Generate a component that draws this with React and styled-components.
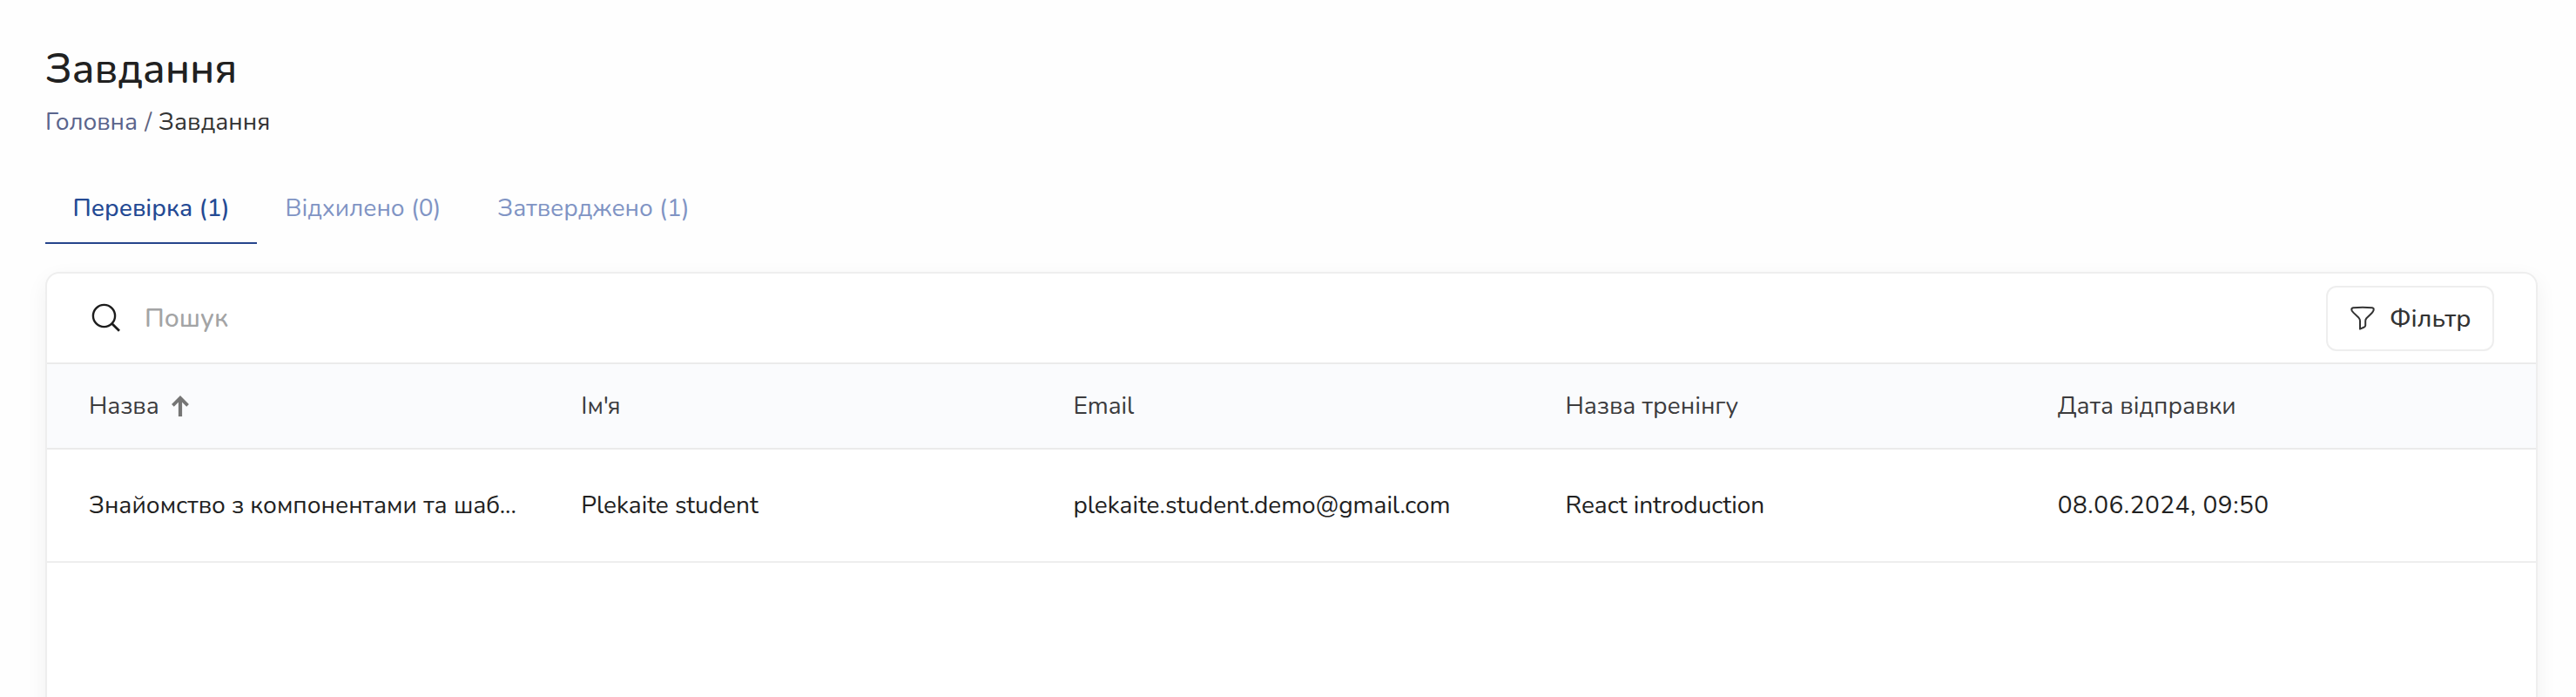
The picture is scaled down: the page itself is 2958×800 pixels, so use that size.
import styled, { createGlobalStyle } from "styled-components";
import { useState } from "react";

const columns = [
  { key: "name", label: "Назва" },
  { key: "student", label: "Ім'я" },
  { key: "email", label: "Email" },
  { key: "training", label: "Назва тренінгу" },
  { key: "date", label: "Дата відправки" },
];

const tasks = [
  {
    name: "Знайомство з компонентами та шаб...",
    student: "Plekaite student",
    email: "plekaite.student.demo@gmail.com",
    training: "React introduction",
    date: "08.06.2024, 09:50",
  },
];

const tabs = [
  { id: "review", label: "Перевірка (1)", width: 243 },
  { id: "rejected", label: "Відхилено (0)", width: 244 },
  { id: "approved", label: "Затверджено (1)", width: 285 },
];

function SearchIcon() {
  return (
    <svg width="34" height="34" viewBox="0 0 34 34" fill="none" stroke="#1c1c1c">
      <circle cx="14.5" cy="14.5" r="12.6" strokeWidth="2.4" />
      <path d="M23.6 23.6L32 31.8" strokeWidth="2.8" />
    </svg>
  );
}

function SortIcon() {
  return (
    <svg width="20" height="24" viewBox="0 0 20 24" fill="none" stroke="#757575">
      <path d="M1.4 11.4L10 2.8l8.6 8.6" strokeWidth="3.8" />
      <path d="M10 3v21" strokeWidth="4.2" />
    </svg>
  );
}

function FilterIcon() {
  return (
    <svg width="28" height="28" viewBox="0 0 28 28" fill="none" stroke="#333" strokeWidth="2" strokeLinejoin="round">
      <path d="M3 2.3Q14 1.3 25 2.3Q27.2 2.6 26.6 5Q26.2 6.6 24.6 8.2L18.4 14.2Q17.2 15.5 17.2 17.4V22.6Q17 23.8 15.8 24.5L11 26.6V17.2Q11 15.4 9.6 13.8L3.2 7.6Q1.6 6.2 1.3 4.6Q1.2 2.6 3 2.3Z" />
    </svg>
  );
}

export default function App() {
  const [activeTab, setActiveTab] = useState("review");
  const [search, setSearch] = useState("");

  return (
    <>
      <GlobalStyle />
      <Page>
        <Title>Завдання</Title>
        <Breadcrumbs>
          <HomeLink>Головна</HomeLink>
          <Separator>/</Separator>
          <CurrentPage>Завдання</CurrentPage>
        </Breadcrumbs>
        <TabList>
          {tabs.map((tab) => (
            <Tab
              key={tab.id}
              $active={tab.id === activeTab}
              $width={tab.width}
              onClick={() => setActiveTab(tab.id)}
            >
              {tab.label}
            </Tab>
          ))}
        </TabList>
        <Card>
          <Toolbar>
            <SearchIcon />
            <SearchInput
              placeholder="Пошук"
              value={search}
              onChange={(event) => setSearch(event.target.value)}
            />
            <FilterButton>
              <FilterIcon />
              <span>Фільтр</span>
            </FilterButton>
          </Toolbar>
          <HeaderRow>
            {columns.map((column) => (
              <HeaderCell key={column.key}>
                <span>{column.label}</span>
                {column.key === "name" && <SortIcon />}
              </HeaderCell>
            ))}
          </HeaderRow>
          {tasks.map((task, index) => (
            <Row key={index}>
              {columns.map(({ key }) => (
                <Cell key={key} $wide={key === "date"}>
                  {task[key]}
                </Cell>
              ))}
            </Row>
          ))}
        </Card>
      </Page>
    </>
  );
}

const GlobalStyle = createGlobalStyle`
  * {
    box-sizing: border-box;
  }

  body {
    margin: 0;
    background: #fefefe;
    font-family: Nunito, Lato, "Noto Sans", sans-serif;
    color: #212121;
  }

  button,
  input {
    font-family: inherit;
  }
`;

const Page = styled.div`
  display: flex;
  flex-direction: column;
  height: 800px;
  padding: 47px 44px 0 52px;
  overflow: hidden;
`;

const Title = styled.h1`
  margin: 0;
  font-size: 48px;
  font-weight: 500;
  line-height: 64px;
  letter-spacing: -0.15px;
`;

const Breadcrumbs = styled.nav`
  display: flex;
  flex: none;
  margin-top: 9px;
  font-size: 28px;
  line-height: 40px;
`;

const HomeLink = styled.a`
  color: #5a648c;
`;

const Separator = styled.span`
  margin: 0 8px;
  color: #5f6480;
`;

const CurrentPage = styled.span`
  color: #333;
`;

const TabList = styled.div`
  display: flex;
  flex: none;
  height: 84px;
  margin-top: 36px;
`;

const Tab = styled.button`
  flex: none;
  width: ${({ $width }) => $width}px;
  padding: 3px 0 0;
  border: none;
  border-bottom: 2px solid ${({ $active }) => ($active ? "#26458c" : "transparent")};
  background: none;
  color: ${({ $active }) => ($active ? "#244a94" : "#8094c4")};
  font-size: 28px;
  font-weight: ${({ $active }) => ($active ? 500 : 400)};
  white-space: nowrap;
`;

const Card = styled.section`
  flex: none;
  height: 700px;
  margin-top: 32px;
  border: 2px solid #eee;
  border-radius: 16px;
  background: #fff;
  box-shadow: 0 8px 24px rgba(0, 0, 0, 0.06);
`;

const Toolbar = styled.div`
  display: flex;
  align-items: center;
  height: 104px;
  padding: 0 48px 0 51px;
  border-bottom: 2px solid #ebebeb;
`;

const SearchInput = styled.input`
  flex: 1;
  margin-left: 27px;
  padding: 1px 0 0;
  border: none;
  outline: none;
  background: none;
  font-size: 30px;
  font-weight: 500;
  line-height: 46px;

  &::placeholder {
    color: #a3a4a5;
    opacity: 1;
  }
`;

const FilterButton = styled.button`
  display: flex;
  align-items: center;
  gap: 17px;
  width: 193px;
  height: 75px;
  padding: 0 0 0 26px;
  border: 2px solid #eee;
  border-radius: 12px;
  background: #fff;
  color: #333;
  font-size: 28.8px;
  font-weight: 500;
`;

const HeaderRow = styled.div`
  display: grid;
  grid-template-columns: repeat(5, 565.2px);
  height: 98px;
  padding-left: 48px;
  border-bottom: 2px solid #ebebeb;
  background: #fafbfd;
`;

const HeaderCell = styled.div`
  display: flex;
  align-items: center;
  gap: 14px;
  color: #3c3c3e;
  font-size: 28px;
`;

const Row = styled.div`
  display: grid;
  grid-template-columns: repeat(5, 565.2px);
  align-items: center;
  height: 130px;
  padding-left: 48px;
  border-bottom: 2px solid #eee;
`;

const Cell = styled.div`
  font-size: 28px;
  letter-spacing: ${({ $wide }) => ($wide ? "0.5px" : "normal")};
  white-space: nowrap;
`;
